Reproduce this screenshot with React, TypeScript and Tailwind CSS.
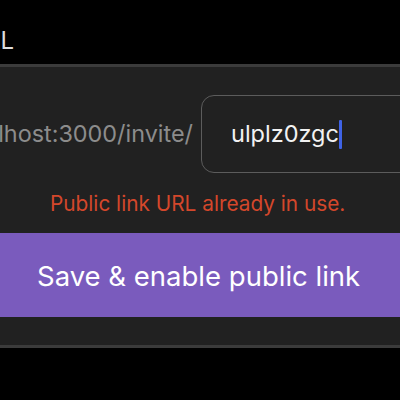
export default function App() {
  return (
    <div className="w-[400px] h-[400px] bg-black overflow-hidden flex flex-col" style={{ fontFamily: "Inter, 'Noto Sans', sans-serif" }}>
      <div className="h-[64px] shrink-0 flex">
        <div className="w-[14px] flex justify-end items-center pt-[18px]">
          <span className="whitespace-nowrap text-[24px] text-[#dedede]">Public link URL</span>
        </div>
      </div>
      <div className="shrink-0 border-y-[3px] border-[#3b3b3b] bg-[#212121] pt-[28px] pb-[28px] flex flex-col">
        <div className="flex items-center h-[78px]">
          <div className="w-[193px] shrink-0 flex justify-end">
            <span className="whitespace-nowrap text-[23.4px] text-[#8c8c8c]">localhost:3000/invite/</span>
          </div>
          <div className="ml-[8px] shrink-0 w-[260px] h-[78px] rounded-[13px] border-[1.5px] border-[#5c5c5c] flex items-center pl-[29px]">
            <span className="text-[23.5px] text-[#f2f2f2]">ulplz0zgc</span>
            <span className="w-[3px] h-[29px] bg-[#3f63e6] rounded-[1px]"></span>
          </div>
        </div>
        <div className="h-[60px] flex items-center pl-[50px] pt-[2px]">
          <span className="text-[20.8px] text-[#d4472b] whitespace-nowrap">Public link URL already in use.</span>
        </div>
        <div className="h-[84px] bg-[#7a5bbd] flex items-center pl-[37px] pt-[4px]">
          <span className="text-[27.5px] text-white whitespace-nowrap">Save &amp; enable public link</span>
        </div>
      </div>
    </div>
  );
}
